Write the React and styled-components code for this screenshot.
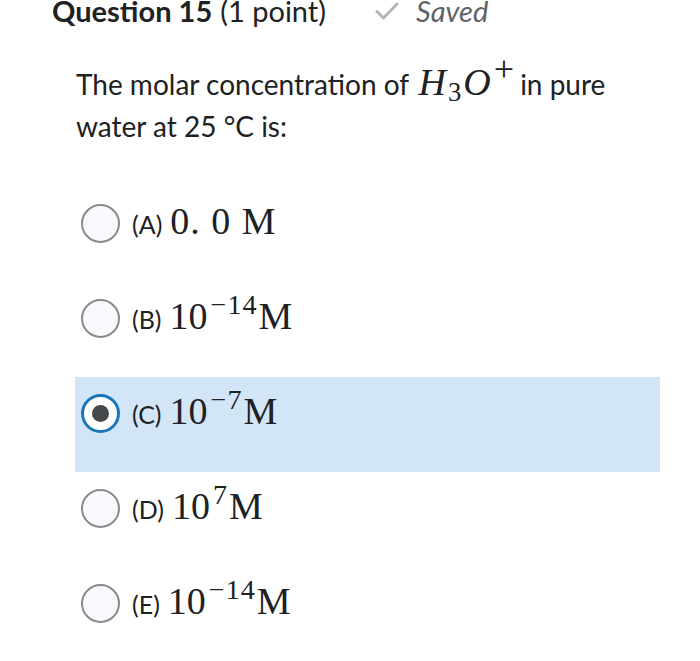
import styled, { createGlobalStyle } from "styled-components";

const GlobalStyle = createGlobalStyle`
  html, body {
    margin: 0;
    padding: 0;
    background: #ffffff;
  }
  body {
    font-family: Lato, "Open Sans", "Liberation Sans", sans-serif;
    color: #202122;
  }
`;

const Page = styled.div`
  width: 700px;
  height: 661px;
  overflow: hidden;
  background: #fff;
`;

const HeaderRow = styled.div`
  display: flex;
  align-items: center;
  height: 24px;
  margin-top: -1px;
  padding-left: 52px;
  font-size: 29px;
  line-height: 24px;
  white-space: nowrap;
`;

const Title = styled.span`
  font-weight: 700;
`;

const Points = styled.span`
  font-weight: 400;
  margin-left: 8px;
`;

const SavedTag = styled.span`
  display: flex;
  align-items: center;
  gap: 17px;
  margin-left: 49px;
  font-style: italic;
  color: #5f6366;
  font-size: 29px;
`;

const Question = styled.p`
  margin: 40px 0 0 0;
  padding-left: 76px;
  width: 540px;
  font-size: 28px;
  line-height: 42px;
`;

const Math = styled.span`
  font-family: "Liberation Serif", "DejaVu Serif", serif;
  font-size: ${({ size }) => size || 38}px;
  line-height: 0;
  letter-spacing: ${({ spread }) => spread || 0}px;
  font-style: ${({ italic }) => (italic ? "italic" : "normal")};
  margin: ${({ italic }) => (italic ? "0 5px 0 -2px" : "0")};
  color: #202122;
`;

const Sub = styled.span`
  font-size: 0.7em;
  vertical-align: -0.22em;
  line-height: 0;
  font-style: normal;
`;

const Sup = styled.span`
  font-size: ${({ big }) => (big ? "0.95em" : "0.74em")};
  vertical-align: ${({ big }) => (big ? "0.38em" : "0.52em")};
  line-height: 0;
  letter-spacing: 1px;
  font-style: normal;
  margin: ${({ big }) => (big ? "0 0 0 1px" : "0 1px 0 3px")};
`;

const Options = styled.div`
  display: flex;
  flex-direction: column;
  margin-top: 40px;
  margin-left: 75px;
  width: 585px;
`;

const Option = styled.div`
  display: flex;
  align-items: center;
  height: 95px;
  box-sizing: border-box;
  padding: 0 0 22px 6px;
  gap: 12px;
  background: ${({ selected }) => (selected ? "#d3e6f8" : "transparent")};
`;

const Radio = styled.span`
  position: relative;
  width: 39px;
  height: 39px;
  box-sizing: border-box;
  border-radius: 50%;
  flex-shrink: 0;
  border: ${({ checked }) => (checked ? "3px solid #1b75bb" : "2px solid #878b8e")};
  background: ${({ checked }) => (checked ? "#ffffff" : "#f8f9fd")};

  &::after {
    content: "";
    display: ${({ checked }) => (checked ? "block" : "none")};
    position: absolute;
    left: 50%;
    top: 50%;
    width: 17px;
    height: 17px;
    margin: -8.5px 0 0 -8.5px;
    border-radius: 50%;
    background: #46494c;
  }
`;

const Label = styled.span`
  display: flex;
  align-items: baseline;
  gap: 8px;
  font-size: 25px;
`;

const Check = () => (
  <svg width="24" height="18" viewBox="0 0 24 18" fill="none">
    <path d="M2 9.5 L8.5 16 L22 2" stroke="#b3b6b8" strokeWidth="3" strokeLinecap="round" strokeLinejoin="round" />
  </svg>
);

const options = [
  { key: "A", body: <Math spread={1}>0. 0 M</Math> },
  { key: "B", body: <Math>10<Sup>−14</Sup>M</Math> },
  { key: "C", body: <Math>10<Sup>−7</Sup>M</Math>, selected: true },
  { key: "D", body: <Math>10<Sup>7</Sup>M</Math> },
  { key: "E", body: <Math>10<Sup>−14</Sup>M</Math> },
];

export default function App() {
  return (
    <Page>
      <GlobalStyle />
      <HeaderRow>
        <Title>Question 15</Title>
        <Points>(1 point)</Points>
        <SavedTag>
          <Check />
          Saved
        </SavedTag>
      </HeaderRow>
      <Question>
        The molar concentration of
        <Math italic spread={2}>
          {" "}H<Sub>3</Sub>O<Sup big>+</Sup>
        </Math>
        in pure water at 25 °C is:
      </Question>
      <Options>
        {options.map((o) => (
          <Option key={o.key} selected={o.selected}>
            <Radio checked={o.selected} />
            <Label>
              ({o.key})
              {o.body}
            </Label>
          </Option>
        ))}
      </Options>
    </Page>
  );
}
